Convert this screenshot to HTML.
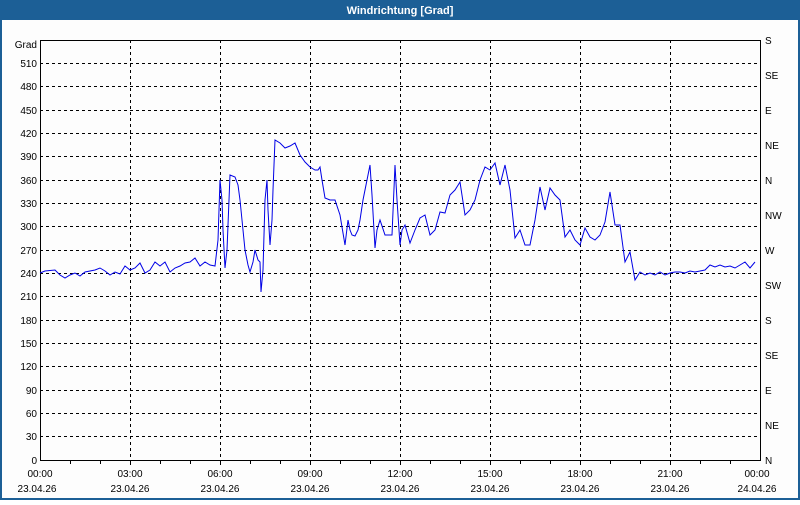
<!DOCTYPE html>
<html><head><style>
body{margin:0;width:800px;height:500px;overflow:hidden;background:#fff;font-family:"Liberation Sans",sans-serif}
</style></head><body>
<svg width="800" height="500" xmlns="http://www.w3.org/2000/svg" font-family="Liberation Sans, sans-serif" font-size="10">
<rect x="0" y="0" width="800" height="500" fill="#1c5f96"/>
<rect x="2" y="20" width="796" height="478" fill="#fdfdfd"/>
<text x="400" y="14" fill="#fff" font-weight="bold" font-size="11" text-anchor="middle">Windrichtung [Grad]</text>
<g stroke="#000" stroke-dasharray="3,3" stroke-width="1" shape-rendering="crispEdges">
<path d="M40 63.5H760M40 86.5H760M40 110.5H760M40 133.5H760M40 156.5H760M40 180.5H760M40 203.5H760M40 226.5H760M40 250.5H760M40 273.5H760M40 296.5H760M40 320.5H760M40 343.5H760M40 366.5H760M40 390.5H760M40 413.5H760M40 436.5H760"/>
<path d="M130.5 40V460M220.5 40V460M310.5 40V460M400.5 40V460M490.5 40V460M580.5 40V460M670.5 40V460"/>
</g>
<rect x="40.5" y="40.5" width="720" height="420" fill="none" stroke="#000" shape-rendering="crispEdges"/>
<path d="M70.5 461v3M100.5 461v3M130.5 461v4M160.5 461v3M190.5 461v3M220.5 461v4M250.5 461v3M280.5 461v3M310.5 461v4M340.5 461v3M370.5 461v3M400.5 461v4M430.5 461v3M460.5 461v3M490.5 461v4M520.5 461v3M550.5 461v3M580.5 461v4M610.5 461v3M640.5 461v3M670.5 461v4M700.5 461v3M730.5 461v3" stroke="#000" shape-rendering="crispEdges"/>
<polyline fill="none" stroke="#0000e6" stroke-width="1" points="40,273 45,271 55,270 60,275 65,278 70,275 75,273 80,276 85,272 95,270 100,268 105,271 110,275 115,272 120,274 125,266 130,270 135,268 140,263 145,273 150,270 155,262 160,266 165,262 170,272 175,268 180,266 185,263 190,262 195,258 200,266 205,262 210,265 215,266 218,240 220,180 222,200 223,230 225,268 227,250 230,175 235,177 238,185 240,200 242,220 245,250 248,265 250,272 253,262 255,250 258,260 260,262 261,292 263,270 265,200 267,180 268,210 270,245 272,220 273,190 275,140 280,143 285,148 290,146 295,143 300,155 305,162 310,167 315,170 318,170 320,167 322,180 325,198 330,200 335,200 340,215 345,245 348,220 350,230 352,235 355,236 358,230 360,220 363,200 370,165 372,195 375,248 377,230 380,220 385,235 388,235 392,235 395,165 397,200 400,245 402,230 405,225 410,243 415,230 420,218 425,215 430,235 435,230 440,212 445,213 450,195 455,190 460,182 465,215 470,210 475,200 480,180 485,167 490,170 495,163 500,185 505,165 510,190 515,238 520,230 525,245 530,245 535,220 540,187 545,210 550,188 555,195 560,200 565,237 570,230 575,240 580,245 585,228 590,237 595,240 600,235 605,222 610,192 615,225 620,225 625,262 630,252 635,280 640,272 645,275 650,273 655,275 660,272 665,275 670,273 675,272 680,272 685,273 690,271 695,272 700,271 705,270 710,265 715,267 720,265 725,267 730,266 735,268 740,265 745,262 750,268 755,262"/>
<g text-anchor="end" fill="#000">
<text x="37" y="48">Grad</text>
<text x="37" y="67">510</text><text x="37" y="90">480</text><text x="37" y="114">450</text><text x="37" y="137">420</text><text x="37" y="160">390</text><text x="37" y="184">360</text><text x="37" y="207">330</text><text x="37" y="230">300</text><text x="37" y="254">270</text><text x="37" y="277">240</text><text x="37" y="300">210</text><text x="37" y="324">180</text><text x="37" y="347">150</text><text x="37" y="370">120</text><text x="37" y="394">90</text><text x="37" y="417">60</text><text x="37" y="440">30</text><text x="37" y="464">0</text>
</g>
<g fill="#000">
<text x="765" y="44">S</text><text x="765" y="79">SE</text><text x="765" y="114">E</text><text x="765" y="149">NE</text><text x="765" y="184">N</text><text x="765" y="219">NW</text><text x="765" y="254">W</text><text x="765" y="289">SW</text><text x="765" y="324">S</text><text x="765" y="359">SE</text><text x="765" y="394">E</text><text x="765" y="429">NE</text><text x="765" y="464">N</text>
</g>
<g text-anchor="middle" fill="#000">
<text x="40" y="477">00:00</text><text x="130" y="477">03:00</text><text x="220" y="477">06:00</text><text x="310" y="477">09:00</text><text x="400" y="477">12:00</text><text x="490" y="477">15:00</text><text x="580" y="477">18:00</text><text x="670" y="477">21:00</text><text x="757" y="477">00:00</text>
<text x="37" y="492">23.04.26</text><text x="130" y="492">23.04.26</text><text x="220" y="492">23.04.26</text><text x="310" y="492">23.04.26</text><text x="400" y="492">23.04.26</text><text x="490" y="492">23.04.26</text><text x="580" y="492">23.04.26</text><text x="670" y="492">23.04.26</text><text x="757" y="492">24.04.26</text>
</g>
</svg>
</body></html>
